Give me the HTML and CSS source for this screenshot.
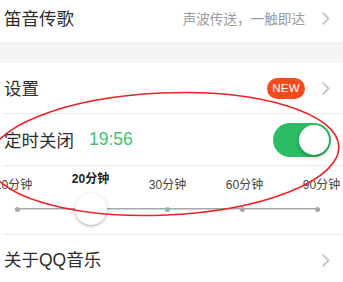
FILE: index.html
```html
<!DOCTYPE html>
<html lang="zh">
<head>
<meta charset="utf-8">
<link rel="stylesheet" href="styles.css">
</head>
<body>
<div class="page">
  <div class="group">
    <div class="row row-first">
      <span class="title">笛音传歌</span>
      <span class="hint">声波传送，一触即达</span>
      <svg class="chev" width="8" height="13" viewBox="0 0 8 13"><path d="M1.2 1.2 L6.5 6.5 L1.2 11.8" fill="none" stroke="#c5c5c8" stroke-width="1.8" stroke-linecap="round" stroke-linejoin="round"/></svg>
    </div>
  </div>
  <div class="gap"></div>
  <div class="group">
    <div class="row">
      <span class="title">设置</span>
      <span class="badge">NEW</span>
      <svg class="chev" width="8" height="13" viewBox="0 0 8 13"><path d="M1.2 1.2 L6.5 6.5 L1.2 11.8" fill="none" stroke="#c5c5c8" stroke-width="1.8" stroke-linecap="round" stroke-linejoin="round"/></svg>
    </div>
    <div class="row row-timer">
      <span class="title">定时关闭</span>
      <span class="time">19:56</span>
      <span class="toggle"><span class="knob"></span></span>
    </div>
    <div class="slider">
      <div class="labels">
        <span class="lbl">10分钟</span>
        <span class="lbl lbl-on">20分钟</span>
        <span class="lbl">30分钟</span>
        <span class="lbl">60分钟</span>
        <span class="lbl">90分钟</span>
      </div>
      <div class="track">
        <span class="dot"></span><span class="dot dot-hidden"></span><span class="dot"></span><span class="dot"></span><span class="dot"></span>
        <span class="thumb"></span>
      </div>
    </div>
    <div class="row row-last">
      <span class="title">关于QQ音乐</span>
      <svg class="chev" width="8" height="13" viewBox="0 0 8 13"><path d="M1.2 1.2 L6.5 6.5 L1.2 11.8" fill="none" stroke="#c5c5c8" stroke-width="1.8" stroke-linecap="round" stroke-linejoin="round"/></svg>
    </div>
  </div>
  <svg class="annot" width="343" height="282" viewBox="0 0 343 282">
    <ellipse cx="164" cy="154" rx="175" ry="61" transform="rotate(-2.5 164 154)" fill="none" stroke="#ec2227" stroke-width="1.6"/>
  </svg>
</div>
</body>
</html>
```
FILE: styles.css
```css
html, body {
  margin: 0;
  padding: 0;
  background: #ffffff;
}
body {
  width: 343px;
  height: 282px;
  overflow: hidden;
  font-family: "Liberation Sans", "Noto Sans CJK SC", sans-serif;
  color: #2e2e2e;
}
.page {
  position: relative;
  width: 343px;
  height: 282px;
  overflow: hidden;
}
.group {
  background: #ffffff;
  padding-left: 3px;
}
.gap {
  height: 20px;
  background: #f4f4f6;
  border-top: 1px solid #ececee;
}
.row {
  display: flex;
  align-items: center;
  height: 50px;
  padding-right: 13px;
  padding-left: 1px;
  border-bottom: 1px solid #ebebeb;
}
.row-first {
  height: 36px;
  padding-bottom: 6px;
  border-bottom: none;
}
.row-last {
  border-bottom: none;
}
.row-timer {
  height: 51px;
}
.title {
  font-family: "Noto Sans CJK SC", sans-serif;
  font-size: 17.5px;
  line-height: 24px;
  color: #2e2e2e;
  flex: 1;
}
.row-last .title {
  font-family: "Liberation Sans", "Noto Sans CJK SC", sans-serif;
}
.row-timer .title {
  flex: none;
}
.hint {
  font-family: "Noto Sans CJK SC", sans-serif;
  font-size: 13.6px;
  color: #9b9b9b;
  margin-right: 17px;
}
.chev {
  display: block;
  flex: none;
}
.badge {
  background: #f64b1d;
  color: #ffffff;
  font-size: 11.5px;
  line-height: 21px;
  height: 21px;
  width: 38px;
  text-align: center;
  border-radius: 11px;
  margin-right: 17px;
  letter-spacing: 0.2px;
}
.time {
  color: #3ec271;
  font-size: 17.5px;
  margin-left: 15px;
  flex: 1;
}
.toggle {
  position: relative;
  width: 58px;
  height: 34px;
  border-radius: 17px;
  background: #2dbd62;
  margin-right: -1px;
}
.knob {
  position: absolute;
  right: 2px;
  top: 2px;
  width: 30px;
  height: 30px;
  border-radius: 50%;
  background: #ffffff;
  box-shadow: 0 2px 4px rgba(0,0,0,0.28);
}
.slider {
  height: 68px;
  border-bottom: 1px solid #ebebeb;
}
.labels {
  display: grid;
  grid-template-columns: repeat(5, 77px);
  margin-left: -28px;
  padding-top: 12px;
  height: 14px;
}
.lbl {
  text-align: center;
  font-family: "Liberation Sans", "Noto Sans CJK SC", sans-serif;
  font-size: 12px;
  line-height: 14px;
  color: #444444;
}
.lbl-on {
  font-weight: bold;
  color: #222222;
  position: relative;
  top: -6px;
}
.track {
  position: relative;
  display: flex;
  justify-content: space-between;
  align-items: center;
  margin: 14px 20px 0 12px;
  width: 305px;
  height: 6px;
  background: linear-gradient(#a4a9a9, #a4a9a9) center / 100% 1.5px no-repeat;
}
.dot {
  width: 5px;
  height: 5px;
  border-radius: 50%;
  background: #a4a9a9;
}
.dot-hidden {
  visibility: hidden;
}
.thumb {
  position: absolute;
  left: 60px;
  top: -13px;
  width: 32px;
  height: 32px;
  border-radius: 50%;
  background: #ffffff;
  box-shadow: 0 1px 3px rgba(0,0,0,0.35);
}
.annot {
  position: absolute;
  left: 0;
  top: 0;
  pointer-events: none;
}
```
